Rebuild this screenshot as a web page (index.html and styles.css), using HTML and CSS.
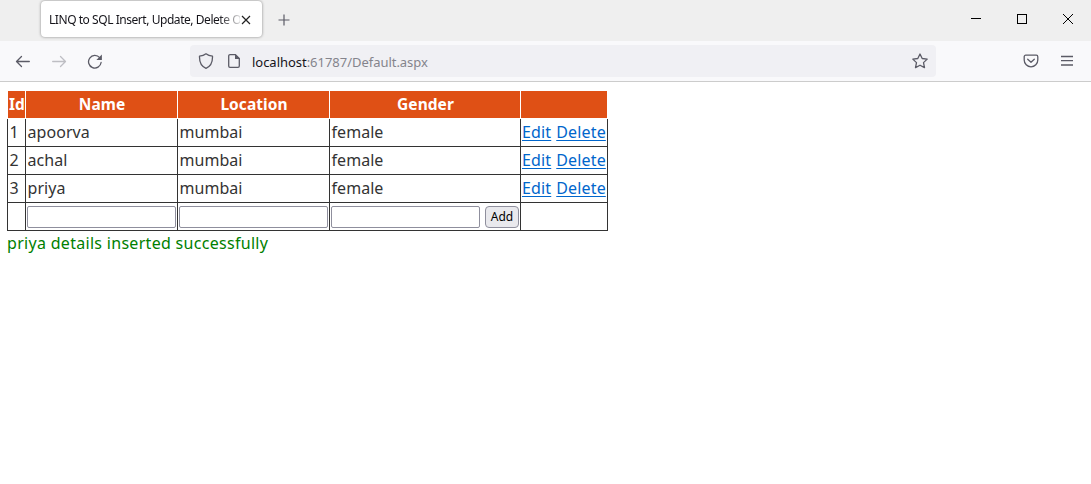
FILE: index.html
```html
<!DOCTYPE html>
<html lang="en">
<head>
<meta charset="utf-8">
<title>LINQ to SQL Insert, Update, Delete</title>
<link rel="stylesheet" href="styles.css">
</head>
<body>
<header class="browser">
  <div class="tabbar">
    <div class="tab"><span class="tab-title">LINQ to SQL Insert, Update, Delete O</span><svg class="tab-close" width="10" height="10" viewBox="0 0 10 10"><path d="M1 1l8 8M9 1L1 9"/></svg></div>
    <svg class="newtab" width="12" height="12" viewBox="0 0 12 12"><path d="M6 .5v11M.5 6h11"/></svg>
    <div class="window-controls">
      <svg width="10" height="10" viewBox="0 0 10 10" shape-rendering="crispEdges"><path d="M0 4.5h10"/></svg>
      <svg width="10" height="10" viewBox="0 0 10 10" shape-rendering="crispEdges"><path d="M.5 .5h9v9h-9z"/></svg>
      <svg width="10" height="10" viewBox="0 0 10 10"><path d="M0 0l10 10M10 0L0 10"/></svg>
    </div>
  </div>
  <nav class="toolbar">
    <svg class="icon back" width="16" height="16" viewBox="0 0 16 16"><path d="M14.300 8.500H1.700M6.500 3.500l-5 5 5 5"/></svg>
    <svg class="icon forward" width="16" height="16" viewBox="0 0 16 16"><path d="M1.700 8.500h12.600M9.500 3.500l5 5-5 5"/></svg>
    <svg class="icon reload" width="16" height="16" viewBox="0 0 16 16"><path d="M12.700 4.700A6.300 6.300 0 1 0 14.100 9.500"/><path class="solid" d="M14.900 1.500v5.500H9.400z"/></svg>
    <div class="address">
      <svg class="icon" width="16" height="16" viewBox="0 0 16 16"><path d="M8 .8C6.300 2.200 4 3 1.500 3.200 1.300 9 3 13.300 8 15.300 13 13.300 14.700 9 14.500 3.200 12 3 9.700 2.200 8 .8z"/></svg>
      <svg class="icon page" width="16" height="16" viewBox="0 0 16 16"><path d="M9.500 1.700H4A1.300 1.300 0 0 0 2.700 3v10A1.300 1.300 0 0 0 4 14.300h8a1.300 1.300 0 0 0 1.300-1.300V5.500z"/><path class="solid" d="M9 1l5 5H9z"/></svg>
      <span class="url"><b>localhost</b>:61787/Default.aspx</span>
      <svg class="icon star" width="16" height="16" viewBox="0 0 16 16"><path d="M8 1l2.200 4.500 5 .6-3.700 3.500 1 5L8 12.200l-4.500 2.400 1-5L.8 6.100l5-.6z"/></svg>
    </div>
    <svg class="icon pocket" width="16" height="16" viewBox="0 0 16 16"><path d="M2.700 2.200h10.600a1.500 1.500 0 0 1 1.500 1.500V7a6.800 6.800 0 0 1-13.600 0V3.700a1.500 1.500 0 0 1 1.500-1.500zM4.700 6.200L8 9.300l3.300-3.100"/></svg>
    <svg class="icon menu" width="12" height="12" viewBox="0 0 12 12"><path d="M0 1.500h12M0 5.700h12M0 10h12"/></svg>
  </nav>
</header>
<main class="content">
  <table class="grid">
    <colgroup><col class="c-id"><col class="c-text"><col class="c-text"><col class="c-gender"><col class="c-actions"></colgroup>
    <thead><tr><th>Id</th><th>Name</th><th>Location</th><th>Gender</th><th></th></tr></thead>
    <tbody>
      <tr><td>1</td><td>apoorva</td><td>mumbai</td><td>female</td><td class="actions"><a href="#">Edit</a><a href="#">Delete</a></td></tr>
      <tr><td>2</td><td>achal</td><td>mumbai</td><td>female</td><td class="actions"><a href="#">Edit</a><a href="#">Delete</a></td></tr>
      <tr><td>3</td><td>priya</td><td>mumbai</td><td>female</td><td class="actions"><a href="#">Edit</a><a href="#">Delete</a></td></tr>
      <tr class="entry"><td></td><td><input type="text"></td><td><input type="text"></td><td><div class="add-row"><input type="text"><button>Add</button></div></td><td></td></tr>
    </tbody>
  </table>
  <p class="message">priya details inserted successfully</p>
</main>
</body>
</html>
```
FILE: styles.css
```css
* { box-sizing: border-box; }
body { margin: 0; background: #fff; font-family: "Noto Sans", sans-serif; overflow: hidden; }
svg { display: block; flex: none; fill: none; stroke: #5b5b66; }

.tabbar { height: 41px; background: #efefef; display: flex; align-items: flex-start; padding-left: 41px; }
.tab { width: 221px; height: 36px; margin-top: 1px; padding: 2px 11px 0 8px; background: #fff; border-radius: 4px; box-shadow: 0 0 3px rgba(0, 0, 0, .45); display: flex; align-items: center; }
.tab-title { width: 191px; white-space: nowrap; font: 12px/18px "Noto Sans", sans-serif; letter-spacing: -.45px; color: #15141a; -webkit-mask-image: linear-gradient(to right, #000 170px, transparent 195px); mask-image: linear-gradient(to right, #000 170px, transparent 195px); }
.tab-close { stroke: #222; stroke-width: 1.2; margin: -1px 0 0 1px; }
.newtab { margin: 14px 0 0 16px; stroke-width: 1.2; }
.window-controls { margin: 14px 18px 0 auto; display: flex; gap: 36px; }
.window-controls svg { stroke: #000; }

.toolbar { height: 41px; background: #f9f9fb; border-bottom: 1px solid #ccc; display: flex; align-items: center; padding-left: 15px; }
.icon { stroke-width: 1.3; stroke-linecap: round; stroke-linejoin: round; }
.solid { fill: #5b5b66; stroke: none; }
.forward { margin-left: 20px; stroke: #bebec3; }
.reload { margin-left: 20px; }
.address { margin-left: 87px; width: 746px; height: 32px; padding: 0 8px; background: #f0f0f4; border-radius: 4px; display: flex; align-items: center; }
.page { margin-left: 12px; }
.url { margin-left: 10px; padding-top: 2px; font-size: 13px; line-height: 20px; letter-spacing: -.03px; color: #84848c; }
.url b { font-weight: 400; color: #15141a; }
.star { margin-left: auto; }
.pocket { margin-left: 87px; }
.menu { margin-left: 22px; }

.content { padding: 9px 7px; color: #333; font-size: 16px; }
.grid { width: 601px; table-layout: fixed; border-collapse: separate; border-spacing: 0; }
.c-id { width: 19px; }
.c-text { width: 152px; }
.c-gender { width: 191px; }
.c-actions { width: 87px; }
.grid th, .grid td { height: 28px; padding: 0 0 1px 1.5px; border: solid #333; border-width: 0 1px 1px 0; line-height: 24px; letter-spacing: .05px; white-space: nowrap; text-align: left; }
.grid td:first-child, .grid th:first-child { border-left-width: 1px; }
.grid th { background: #df5015; background-clip: padding-box; border-color: #fff; color: #fff; font-weight: 700; font-size: 15.5px; text-align: center; padding: 0 0 1px 1px; }
.grid .entry td { padding: 0 0 0 1px; }
.grid .actions { padding-left: 1px; }
.actions a { color: #0066cc; text-decoration: underline; text-decoration-thickness: 1px; text-underline-offset: 2px; text-decoration-skip-ink: none; letter-spacing: .15px; }
.actions a + a { margin-left: 5px; }
input { display: block; width: 149px; height: 22px; border: 1px solid #8f8f9d; border-radius: 2px; background: #fff; padding: 1px; }
.add-row { display: flex; }
button { width: 34px; height: 22px; margin-left: 5px; padding: 0; border: 1px solid #8f8f9d; border-radius: 4px; background: #e9e9ed; color: #000; font: 12px/18px "Noto Sans", sans-serif; }
.message { margin: 0; line-height: 24px; letter-spacing: .3px; color: #008000; }
```
